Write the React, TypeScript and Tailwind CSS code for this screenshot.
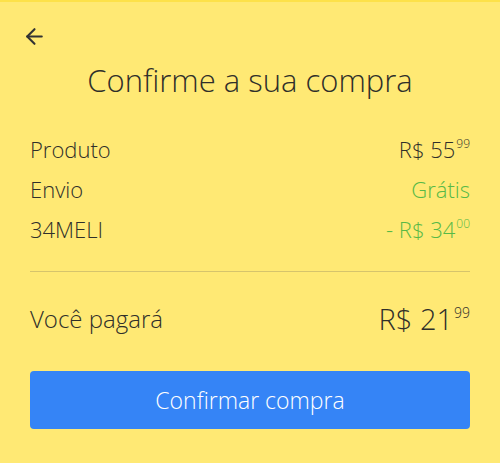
import { ArrowLeft } from 'lucide-react'

function Price({
  amount,
  cents,
  prefix = '',
  className = '',
  supClass = 'text-[12px]',
}: {
  amount: string
  cents: string
  prefix?: string
  className?: string
  supClass?: string
}) {
  return (
    <span className={`flex items-start ${className}`}>
      {prefix}R$ {amount}
      <span className={`ml-[1px] leading-none ${supClass}`}>{cents}</span>
    </span>
  )
}

export default function App() {
  return (
    <div
      className="w-[500px] h-[463px] bg-[#ffe974] border-t-2 border-[#fde14a] text-[#2f2f2a] flex flex-col font-light"
      style={{ fontFamily: '"Open Sans", "Noto Sans", sans-serif' }}
    >
      <div className="pl-[22px] pt-[22px] h-[46px]">
        <ArrowLeft size={25} strokeWidth={2} className="text-[#333333]" />
      </div>
      <h1 className="text-center text-[31px] leading-[36px] mt-[14px]">
        Confirme a sua compra
      </h1>
      <div className="px-[30px] mt-[37px] flex flex-col gap-[11px] text-[22px] leading-[29px]">
        <div className="flex justify-between">
          <span>Produto</span>
          <Price amount="55" cents="99" supClass="text-[12px] mt-[3px]" />
        </div>
        <div className="flex justify-between">
          <span>Envio</span>
          <span className="text-[#58b947]">Grátis</span>
        </div>
        <div className="flex justify-between">
          <span>34MELI</span>
          <Price amount="34" cents="00" prefix="- " className="text-[#58b947]" supClass="text-[12px] mt-[3px]" />
        </div>
      </div>
      <div className="mx-[30px] mt-[27px] border-t border-[#d6c46c]" />
      <div className="px-[30px] mt-[29px] flex justify-between items-center">
        <span className="text-[24px]">Você pagará</span>
        <Price amount="21" cents="99" className="text-[29px] leading-[34px]" supClass="text-[14px] mt-[4px]" />
      </div>
      <button className="mx-[30px] mt-[34px] h-[58px] rounded-[4px] bg-[#3584f6] text-white text-[23px] font-light">
        Confirmar compra
      </button>
    </div>
  )
}
